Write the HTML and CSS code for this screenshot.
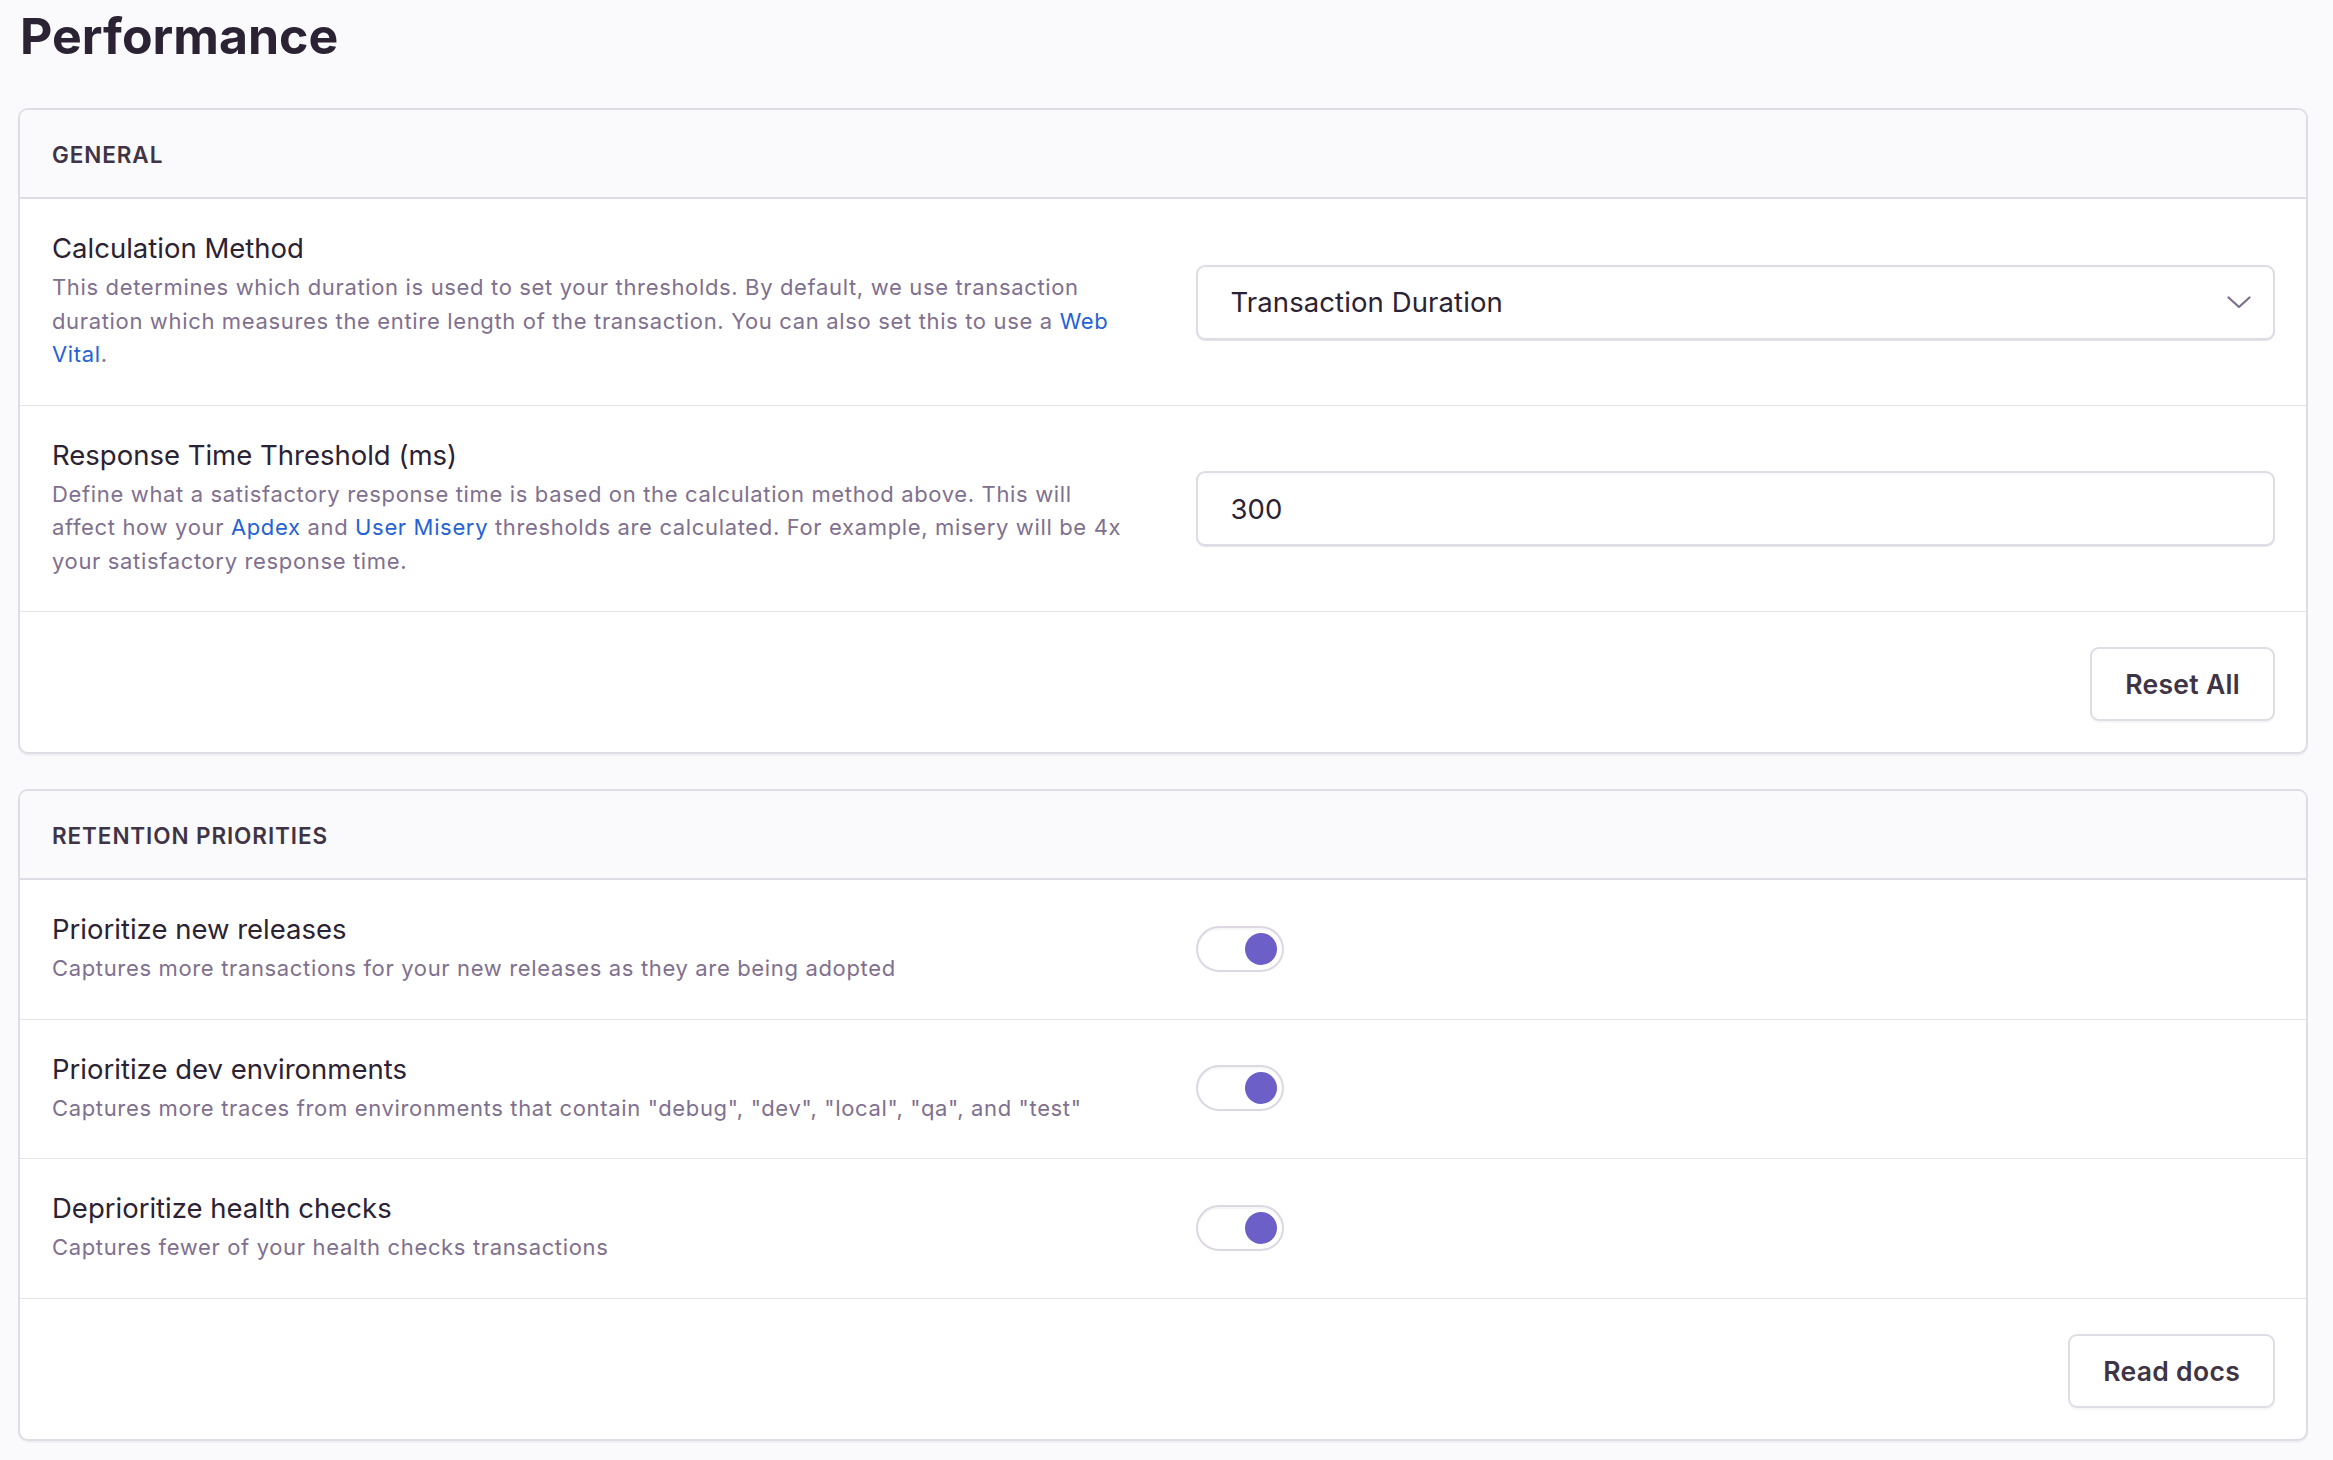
FILE: index.html
```html
<!DOCTYPE html>
<html lang="en">
<head>
<meta charset="utf-8">
<title>Performance</title>
<link rel="stylesheet" href="styles.css">
</head>
<body>
<main class="page">
  <h1 class="page-title">Performance</h1>

  <section class="panel">
    <header class="panel-header">General</header>
    <div class="field">
      <div class="field-label">
        <div class="label">Calculation Method</div>
        <div class="help">This determines which duration is used to set your thresholds. By default, we use transaction duration which measures the entire length of the transaction. You can also set this to use a <a href="#">Web Vital</a>.</div>
      </div>
      <div class="field-control">
        <div class="select">
          <span class="select-value">Transaction Duration</span>
          <svg class="chevron" width="24" height="13" viewBox="0 0 24 13" aria-hidden="true"><polyline points="1.5,1.5 12,11 22.5,1.5" fill="none" stroke="#80708f" stroke-width="2.3" stroke-linecap="round" stroke-linejoin="round"/></svg>
        </div>
      </div>
    </div>
    <div class="field">
      <div class="field-label">
        <div class="label">Response Time Threshold (ms)</div>
        <div class="help">Define what a satisfactory response time is based on the calculation method above. This will affect how your <a href="#">Apdex</a> and <a href="#">User Misery</a> thresholds are calculated. For example, misery will be 4x your satisfactory response time.</div>
      </div>
      <div class="field-control">
        <div class="input">300</div>
      </div>
    </div>
    <footer class="panel-footer">
      <button class="btn">Reset All</button>
    </footer>
  </section>

  <section class="panel">
    <header class="panel-header">Retention Priorities</header>
    <div class="field">
      <div class="field-label">
        <div class="label">Prioritize new releases</div>
        <div class="help">Captures more transactions for your new releases as they are being adopted</div>
      </div>
      <div class="field-control">
        <span class="toggle"><span class="knob"></span></span>
      </div>
    </div>
    <div class="field">
      <div class="field-label">
        <div class="label">Prioritize dev environments</div>
        <div class="help">Captures more traces from environments that contain "debug", "dev", "local", "qa", and "test"</div>
      </div>
      <div class="field-control">
        <span class="toggle"><span class="knob"></span></span>
      </div>
    </div>
    <div class="field">
      <div class="field-label">
        <div class="label">Deprioritize health checks</div>
        <div class="help">Captures fewer of your health checks transactions</div>
      </div>
      <div class="field-control">
        <span class="toggle"><span class="knob"></span></span>
      </div>
    </div>
    <footer class="panel-footer">
      <button class="btn">Read docs</button>
    </footer>
  </section>
</main>
</body>
</html>
```

FILE: styles.css
```css
* { box-sizing: border-box; }

html, body {
  margin: 0;
  padding: 0;
  background: #faf9fb;
}

body {
  font-family: Inter, "Noto Sans", sans-serif;
  color: #2b2233;
}

.page {
  padding: 6px 25px 20px 18px;
}

.page-title {
  margin: 0 0 42px 2px;
  font-size: 50px;
  line-height: 60px;
  font-weight: 700;
  color: #2b2233;
  letter-spacing: 0;
}

.panel {
  background: #fff;
  border: 2px solid #e0dce5;
  border-radius: 10px;
  margin-bottom: 35px;
  box-shadow: 0 2px 0 rgba(37, 11, 54, 0.04);
  overflow: hidden;
}

.panel-header {
  background: #faf9fb;
  border-bottom: 2px solid #e0dce5;
  padding: 32px 32px 29px 32px;
  font-size: 22.5px;
  line-height: 26px;
  font-weight: 600;
  letter-spacing: 0.9px;
  text-transform: uppercase;
  color: #3e3446;
}

.field {
  display: grid;
  grid-template-columns: 1fr 1fr;
  align-items: center;
  padding: 32px 31px 33px 32px;
  border-bottom: 1px solid #e7e3eb;
}

.field-label {
  padding-right: 34px;
}

.label {
  font-size: 27.5px;
  line-height: 34px;
  color: #2b2233;
}

.help {
  margin-top: 6px;
  font-size: 22px;
  line-height: 33.5px;
  color: #80708f;
  letter-spacing: 0.65px;
}

.help a {
  color: #2562d4;
  text-decoration: none;
}

.field-control {
  padding-left: 32px;
  display: flex;
  align-items: center;
}

.select,
.input {
  width: 100%;
  height: 75px;
  margin-top: 2px;
  display: flex;
  align-items: center;
  justify-content: space-between;
  padding: 0 22px 0 33px;
  border: 2px solid #e0dce5;
  border-radius: 9px;
  background: #fff;
  box-shadow: inset 0 2px 0 rgba(45, 0, 85, 0.02), 0 1px 0 #e6e2ea;
  font-size: 27.5px;
  letter-spacing: 0.1px;
  color: #2b2233;
}

.toggle {
  width: 88px;
  height: 46px;
  border: 2px solid #dcd7e2;
  border-radius: 23px;
  background: #fff;
  box-shadow: inset 0 2px 1px rgba(43, 34, 51, 0.04);
  display: flex;
  align-items: center;
  justify-content: flex-end;
  padding: 0 5px;
}

.knob {
  width: 32px;
  height: 32px;
  border-radius: 50%;
  background: #6c5fc7;
}

.panel-footer {
  display: flex;
  justify-content: flex-end;
  padding: 35px 31px 31px 32px;
}

.btn {
  height: 74px;
  padding: 0 33px;
  font-family: Inter, "Noto Sans", sans-serif;
  font-size: 26.5px;
  font-weight: 600;
  letter-spacing: 0.3px;
  color: #3e3446;
  background: #fff;
  border: 2px solid #e0dce5;
  border-radius: 9px;
  box-shadow: 0 2px 0 rgba(43, 34, 51, 0.04);
}
```
